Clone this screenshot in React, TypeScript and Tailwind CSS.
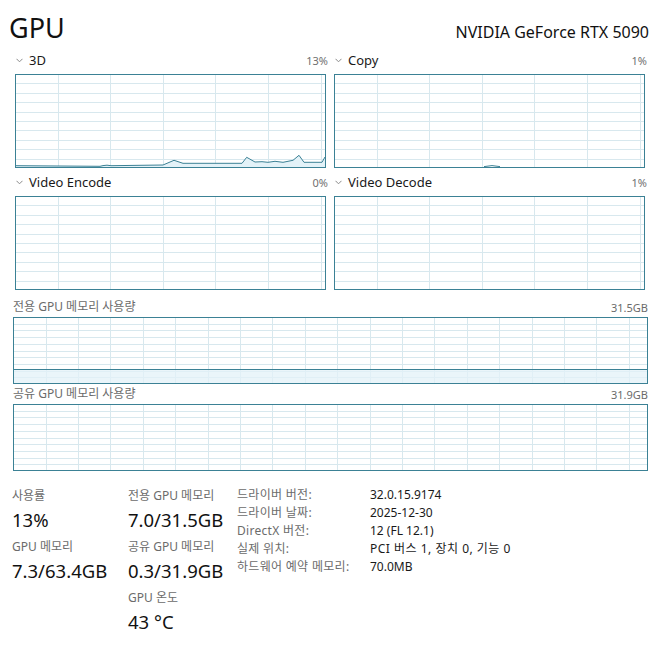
import type { ReactNode } from 'react';

const BORDER = '#3b8195';
const GRID = '#d8e8ee';
const FILL = '#e3f2f8';

interface ChartProps {
  w: number;
  h: number;
  vStart: number;
  vStep: number;
  rows: number;
  children?: ReactNode;
}

function Chart({ w, h, vStart, vStep, rows, children }: ChartProps) {
  const vLines: number[] = [];
  for (let x = vStart; x < w - 1; x += vStep) vLines.push(Math.round(x) + 0.5);
  const hLines: number[] = [];
  for (let i = 1; i < rows; i++) hLines.push(Math.round((h * i) / rows) + 0.5);

  return (
    <svg width={w} height={h} viewBox={`0 0 ${w} ${h}`} className="block">
      <rect x={0} y={0} width={w} height={h} fill="#ffffff" />
      {hLines.map((y) => (
        <line key={`h${y}`} x1={1} x2={w - 1} y1={y} y2={y} stroke={GRID} strokeWidth={1} />
      ))}
      {vLines.map((x) => (
        <line key={`v${x}`} x1={x} x2={x} y1={1} y2={h - 1} stroke={GRID} strokeWidth={1} />
      ))}
      {children}
      <rect x={0.5} y={0.5} width={w - 1} height={h - 1} fill="none" stroke={BORDER} strokeWidth={1} />
    </svg>
  );
}

// 3D usage trace, in chart coordinates
const trace: [number, number][] = [
  [1, 91.7], [85, 92.3], [88, 91.6], [92, 91.2], [96, 91.7], [148, 91], [159, 86.3], [168, 89.3],
  [227, 89.3], [231.7, 83.3], [240, 88], [247, 87.7], [253, 88.3], [260, 87.3], [268, 88.3],
  [278, 86.3], [284, 81.3], [289, 88.3], [307, 88.3], [310, 83],
];

function tracePath(pts: [number, number][]) {
  return pts.map(([x, y], i) => `${i === 0 ? 'M' : 'L'}${x} ${y}`).join(' ');
}

function Chevron() {
  return (
    <svg width={7} height={5} viewBox="0 0 7 5" className="shrink-0">
      <polyline points="0.5,0.8 3.5,3.8 6.5,0.8" fill="none" stroke="#8a8a8a" strokeWidth={1} />
    </svg>
  );
}

function EngineLabel({ name, value }: { name: string; value: string }) {
  return (
    <div className="flex h-[20px] w-[313px] items-center">
      <div className="ml-[1px]">
        <Chevron />
      </div>
      <span className="ml-[6px] text-[13px] leading-none text-[#1a1a1a]">{name}</span>
      <span className="ml-auto text-[11px] leading-none text-[#707070]">{value}</span>
    </div>
  );
}

function Stat({ label, value }: { label: string; value: string }) {
  return (
    <div className="mb-[4px]">
      <div className="h-[20px] text-[12px] leading-[20px] text-[#6b6b6b]">{label}</div>
      <div className="h-[27px] text-[18.5px] leading-[27px] text-[#111111]">{value}</div>
    </div>
  );
}

const details: [string, string][] = [
  ['드라이버 버전:', '32.0.15.9174'],
  ['드라이버 날짜:', '2025-12-30'],
  ['DirectX 버전:', '12 (FL 12.1)'],
  ['실제 위치:', 'PCI 버스 1, 장치 0, 기능 0'],
  ['하드웨어 예약 메모리:', '70.0MB'],
];

export default function App() {
  const fillPath = `${tracePath(trace)} L310 93 L1 93 Z`;

  return (
    <div className="h-[661px] w-[667px] overflow-hidden bg-white font-['Noto_Sans','Noto_Sans_CJK_KR',sans-serif] text-[#111111]">
      {/* Header */}
      <div className="flex items-baseline justify-between pl-[9px] pr-[18px] pt-[14px]">
        <h1 className="text-[27px] leading-none">GPU</h1>
        <div className="text-[16px] leading-none">NVIDIA GeForce RTX 5090</div>
      </div>

      {/* Engine charts */}
      <div className="mt-[9px] grid grid-cols-[311px_311px] gap-x-[8px] gap-y-[4px] pl-[15px]">
        <div>
          <EngineLabel name="3D" value="13%" />
          <div className="mt-[4px]">
            <Chart w={311} h={94} vStart={42.5} vStep={52.6} rows={10}>
              <path d={fillPath} fill={FILL} />
              <path d={tracePath(trace)} fill="none" stroke={BORDER} strokeWidth={1} />
            </Chart>
          </div>
        </div>
        <div>
          <EngineLabel name="Copy" value="1%" />
          <div className="mt-[4px]">
            <Chart w={311} h={94} vStart={42.5} vStep={52.6} rows={10}>
              <path d="M150 92.6 L158 91.6 L166 92.6" fill="none" stroke={BORDER} strokeWidth={1} />
            </Chart>
          </div>
        </div>
        <div>
          <EngineLabel name="Video Encode" value="0%" />
          <div className="mt-[4px]">
            <Chart w={311} h={94} vStart={42.5} vStep={52.6} rows={10} />
          </div>
        </div>
        <div>
          <EngineLabel name="Video Decode" value="1%" />
          <div className="mt-[4px]">
            <Chart w={311} h={94} vStart={42.5} vStep={52.6} rows={10} />
          </div>
        </div>
      </div>

      {/* Memory charts */}
      <div className="mt-[7px] w-[648px] pl-[13px]">
        <div className="flex h-[20px] items-center justify-between text-[#6b6b6b]">
          <span className="text-[12px] leading-none">전용 GPU 메모리 사용량</span>
          <span className="text-[11px] leading-none">31.5GB</span>
        </div>
        <Chart w={635} h={67} vStart={32.6} vStep={32.4} rows={10}>
          <rect x={1} y={52} width={633} height={14} fill={FILL} fillOpacity={0.75} />
          <line x1={1} x2={634} y1={52.5} y2={52.5} stroke={BORDER} strokeWidth={1} />
        </Chart>
        <div className="flex h-[20px] items-center justify-between text-[#6b6b6b]">
          <span className="text-[12px] leading-none">공유 GPU 메모리 사용량</span>
          <span className="text-[11px] leading-none">31.9GB</span>
        </div>
        <Chart w={635} h={67} vStart={32.6} vStep={32.4} rows={10} />
      </div>

      {/* Stats */}
      <div className="mt-[15px] flex pl-[12px]">
        <div className="w-[116px]">
          <Stat label="사용률" value="13%" />
          <Stat label="GPU 메모리" value="7.3/63.4GB" />
        </div>
        <div className="w-[109px]">
          <Stat label="전용 GPU 메모리" value="7.0/31.5GB" />
          <Stat label="공유 GPU 메모리" value="0.3/31.9GB" />
          <Stat label="GPU 온도" value="43 °C" />
        </div>
        <div className="grid grid-cols-[133px_auto] content-start text-[12px] leading-[18px]">
          {details.map(([k, v]) => (
            <div key={k} className="contents">
              <div className="h-[18px] tracking-[0.3px] text-[#6b6b6b]">{k}</div>
              <div className={`h-[18px] text-[#1a1a1a] ${v.startsWith('PCI') ? 'tracking-[0.5px]' : ''}`}>{v}</div>
            </div>
          ))}
        </div>
      </div>
    </div>
  );
}
